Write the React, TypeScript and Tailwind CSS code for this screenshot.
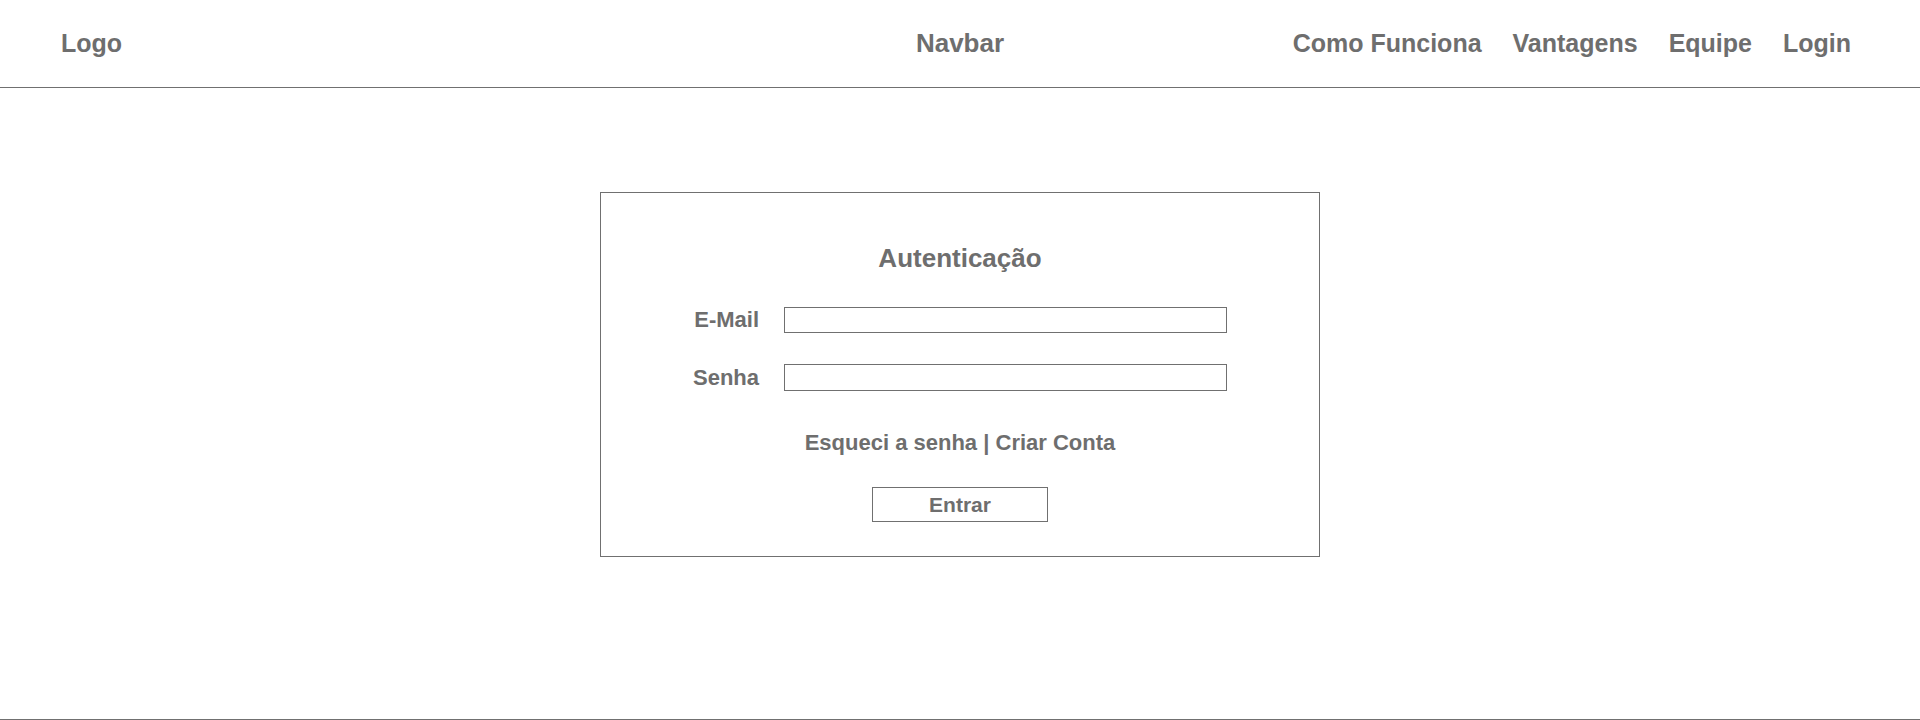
import React from "react";

const navLinks = ["Como Funciona", "Vantagens", "Equipe", "Login"];

export default function App() {
  return (
    <div
      className="min-h-[720px] flex flex-col bg-white text-[#6e6e6e]"
      style={{ fontFamily: '"Liberation Sans", Arial, sans-serif' }}
    >
      <header className="h-[88px] border-b border-[#707070] grid grid-cols-[1fr_auto_1fr] items-center pl-[61px] pr-[69px] text-[25px] font-bold">
        <div>Logo</div>
        <div className="ml-[8px] text-[26px]">Navbar</div>
        <nav className="flex justify-end gap-[31px]">
          {navLinks.map((l) => (
            <a key={l} href="#" className="whitespace-nowrap">
              {l}
            </a>
          ))}
        </nav>
      </header>

      <main className="flex-1 flex justify-center pt-[104px]">
        <div className="w-[720px] h-[365px] border border-[#707070] flex flex-col items-center pt-[49px] pb-[33px]">
          <h1 className="text-[26px] leading-[32px] font-bold">Autenticação</h1>

          <div className="mt-[33px] grid grid-cols-[auto_443px] gap-x-[25px] gap-y-[31px] items-center">
            <label className="text-[22px] leading-[26px] font-bold text-right">E-Mail</label>
            <input className="h-[26px] border border-[#707070] outline-none" />
            <label className="text-[22px] leading-[26px] font-bold text-right">Senha</label>
            <input type="password" className="h-[27px] border border-[#707070] outline-none" />
          </div>

          <div className="mt-[38px] text-[22px] leading-[28px] font-bold">
            <a href="#">Esqueci a senha</a> | <a href="#">Criar Conta</a>
          </div>

          <button className="mt-[30px] w-[176px] h-[35px] border border-[#707070] text-[21px] font-bold">
            Entrar
          </button>
        </div>
      </main>

      <footer className="h-[1px] border-t border-[#707070]" />
    </div>
  );
}
